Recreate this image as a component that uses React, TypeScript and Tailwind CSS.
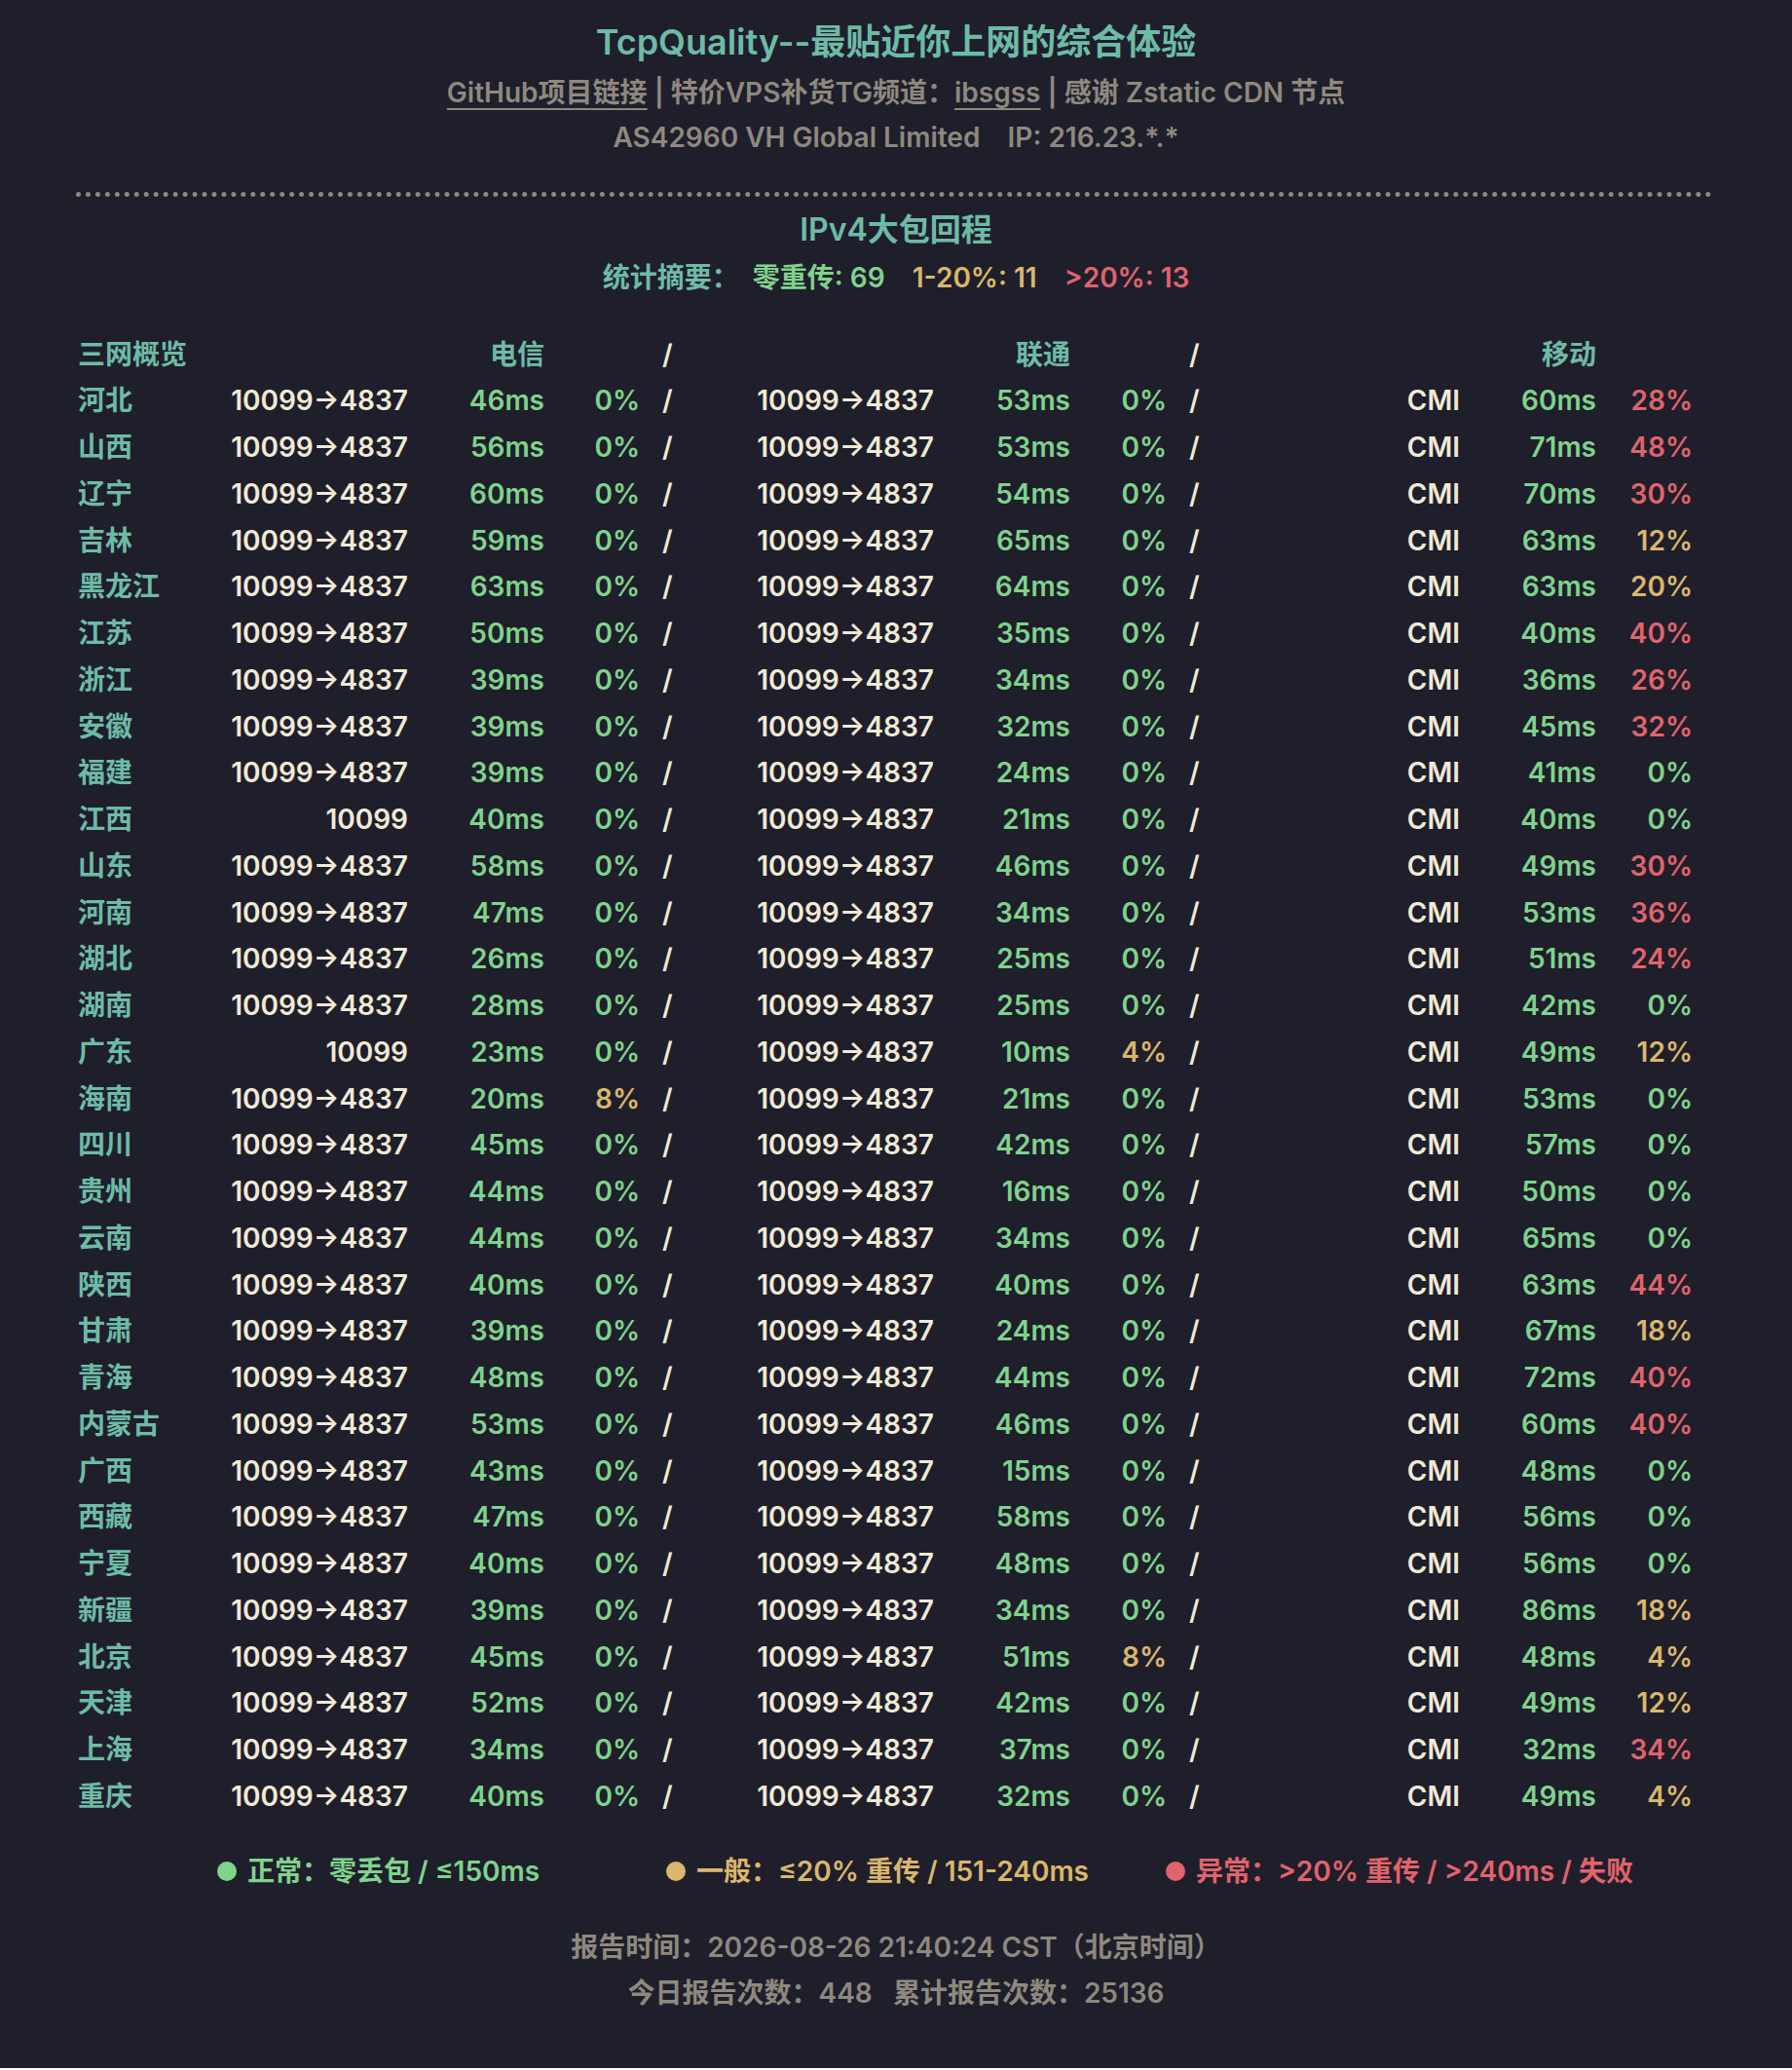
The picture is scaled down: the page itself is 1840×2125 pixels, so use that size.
import React from 'react';

type Row = [string, string, number, number, string, number, number, number, number];

// 省份, 电信ASN, 电信ms, 电信%, 联通ASN, 联通ms, 联通%, 移动ms, 移动%
const rows: Row[] = [
  ['河北', '10099→4837', 46, 0, '10099→4837', 53, 0, 60, 28],
  ['山西', '10099→4837', 56, 0, '10099→4837', 53, 0, 71, 48],
  ['辽宁', '10099→4837', 60, 0, '10099→4837', 54, 0, 70, 30],
  ['吉林', '10099→4837', 59, 0, '10099→4837', 65, 0, 63, 12],
  ['黑龙江', '10099→4837', 63, 0, '10099→4837', 64, 0, 63, 20],
  ['江苏', '10099→4837', 50, 0, '10099→4837', 35, 0, 40, 40],
  ['浙江', '10099→4837', 39, 0, '10099→4837', 34, 0, 36, 26],
  ['安徽', '10099→4837', 39, 0, '10099→4837', 32, 0, 45, 32],
  ['福建', '10099→4837', 39, 0, '10099→4837', 24, 0, 41, 0],
  ['江西', '10099', 40, 0, '10099→4837', 21, 0, 40, 0],
  ['山东', '10099→4837', 58, 0, '10099→4837', 46, 0, 49, 30],
  ['河南', '10099→4837', 47, 0, '10099→4837', 34, 0, 53, 36],
  ['湖北', '10099→4837', 26, 0, '10099→4837', 25, 0, 51, 24],
  ['湖南', '10099→4837', 28, 0, '10099→4837', 25, 0, 42, 0],
  ['广东', '10099', 23, 0, '10099→4837', 10, 4, 49, 12],
  ['海南', '10099→4837', 20, 8, '10099→4837', 21, 0, 53, 0],
  ['四川', '10099→4837', 45, 0, '10099→4837', 42, 0, 57, 0],
  ['贵州', '10099→4837', 44, 0, '10099→4837', 16, 0, 50, 0],
  ['云南', '10099→4837', 44, 0, '10099→4837', 34, 0, 65, 0],
  ['陕西', '10099→4837', 40, 0, '10099→4837', 40, 0, 63, 44],
  ['甘肃', '10099→4837', 39, 0, '10099→4837', 24, 0, 67, 18],
  ['青海', '10099→4837', 48, 0, '10099→4837', 44, 0, 72, 40],
  ['内蒙古', '10099→4837', 53, 0, '10099→4837', 46, 0, 60, 40],
  ['广西', '10099→4837', 43, 0, '10099→4837', 15, 0, 48, 0],
  ['西藏', '10099→4837', 47, 0, '10099→4837', 58, 0, 56, 0],
  ['宁夏', '10099→4837', 40, 0, '10099→4837', 48, 0, 56, 0],
  ['新疆', '10099→4837', 39, 0, '10099→4837', 34, 0, 86, 18],
  ['北京', '10099→4837', 45, 0, '10099→4837', 51, 8, 48, 4],
  ['天津', '10099→4837', 52, 0, '10099→4837', 42, 0, 49, 12],
  ['上海', '10099→4837', 34, 0, '10099→4837', 37, 0, 32, 34],
  ['重庆', '10099→4837', 40, 0, '10099→4837', 32, 0, 49, 4],
];

const pctColor = (p: number) => {
  if (p === 0) return 'text-[#7fd38c]';
  if (p <= 20) return 'text-[#d9b76c]';
  return 'text-[#e0646c]';
};

const msColor = (ms: number) => {
  if (ms <= 150) return 'text-[#7fd38c]';
  if (ms <= 240) return 'text-[#d9b76c]';
  return 'text-[#e0646c]';
};

function Cells({ asn, ms, pct }: { asn: string; ms: number; pct: number }) {
  return (
    <>
      <div className="text-right text-[#f0ead6]">{asn}</div>
      <div className={`text-right ${msColor(ms)}`}>{ms}ms</div>
      <div className={`text-right ${pctColor(pct)}`}>{pct}%</div>
    </>
  );
}

const Slash = () => <div className="pl-[23px] text-[#f0ead6]">/</div>;

export default function App() {
  const gridCols =
    'grid grid-cols-[152px_187px_140px_98px_43px_259px_140px_99px_43px_258px_140px_99px] leading-[47.75px]';

  return (
    <div
      className="bg-[#1f1e2b] px-[78px] pt-[19px] pb-[53px] font-semibold text-[28px]"
      style={{ fontFamily: 'Inter, "Noto Sans CJK SC", "Noto Sans", sans-serif' }}
    >
      <div className="text-center">
        <h1 className="text-[36px] leading-[48px] text-[#6dbba6]">TcpQuality--最贴近你上网的综合体验</h1>
        <div className="leading-[56px] text-[#8e897e]">
          <span className="underline underline-offset-[6px] decoration-2">GitHub项目链接</span>
          <span> | </span>
          <span>特价VPS补货TG频道：</span>
          <span className="underline underline-offset-[6px] decoration-2">ibsgss</span>
          <span> | </span>
          <span>感谢 Zstatic CDN 节点</span>
        </div>
        <div className="leading-[36px] text-[#8e897e] whitespace-pre">
          AS42960 VH Global Limited{'    '}IP: 216.23.*.*
        </div>
      </div>

      <div className="mt-[38px] mr-[4px] border-t-[5px] border-dotted border-[#8e897e]" />

      <div className="mt-[14px] text-center text-[32px] leading-[40px] text-[#6dbba6]">IPv4大包回程</div>
      <div className="mt-[9px] text-center leading-[40px] whitespace-pre">
        <span className="text-[#6dbba6]">统计摘要：{'  '}</span>
        <span className="text-[#7fd38c]">零重传: 69</span>
        <span>{'    '}</span>
        <span className="text-[#d9b76c]">1-20%: 11</span>
        <span>{'    '}</span>
        <span className="text-[#e0646c]">&gt;20%: 13</span>
      </div>

      <div className="mt-[35.5px] ml-[2px]">
        <div className={`${gridCols} text-[#6dbba6]`}>
          <div className="col-span-2">三网概览</div>
          <div className="text-right">电信</div>
          <div />
          <Slash />
          <div />
          <div className="text-right">联通</div>
          <div />
          <Slash />
          <div />
          <div className="text-right">移动</div>
          <div />
        </div>
        {rows.map((r) => (
          <div key={r[0]} className={gridCols}>
            <div className="text-[#6dbba6]">{r[0]}</div>
            <Cells asn={r[1]} ms={r[2]} pct={r[3]} />
            <Slash />
            <Cells asn={r[4]} ms={r[5]} pct={r[6]} />
            <Slash />
            <Cells asn="CMI" ms={r[7]} pct={r[8]} />
          </div>
        ))}
      </div>

      <div className="mt-[32.5px] flex leading-[40px] pl-[145px]">
        <div className="w-[461px] flex items-center text-[#7fd38c]">
          <span className="w-[20px] h-[20px] rounded-full bg-[#7fd38c] mr-[11px]" />
          正常：零丢包 / ≤150ms
        </div>
        <div className="w-[513px] flex items-center text-[#d9b76c]">
          <span className="w-[20px] h-[20px] rounded-full bg-[#d9b76c] mr-[11px]" />
          一般：≤20% 重传 / 151-240ms
        </div>
        <div className="flex items-center text-[#e0646c]">
          <span className="w-[20px] h-[20px] rounded-full bg-[#e0646c] mr-[11px]" />
          异常：&gt;20% 重传 / &gt;240ms / 失败
        </div>
      </div>

      <div className="mt-[34.5px] text-center text-[#8e897e] leading-[47px]">
        <div>报告时间：2026-08-26 21:40:24 CST（北京时间）</div>
        <div className="whitespace-pre">今日报告次数：448{'   '}累计报告次数：25136</div>
      </div>
    </div>
  );
}
